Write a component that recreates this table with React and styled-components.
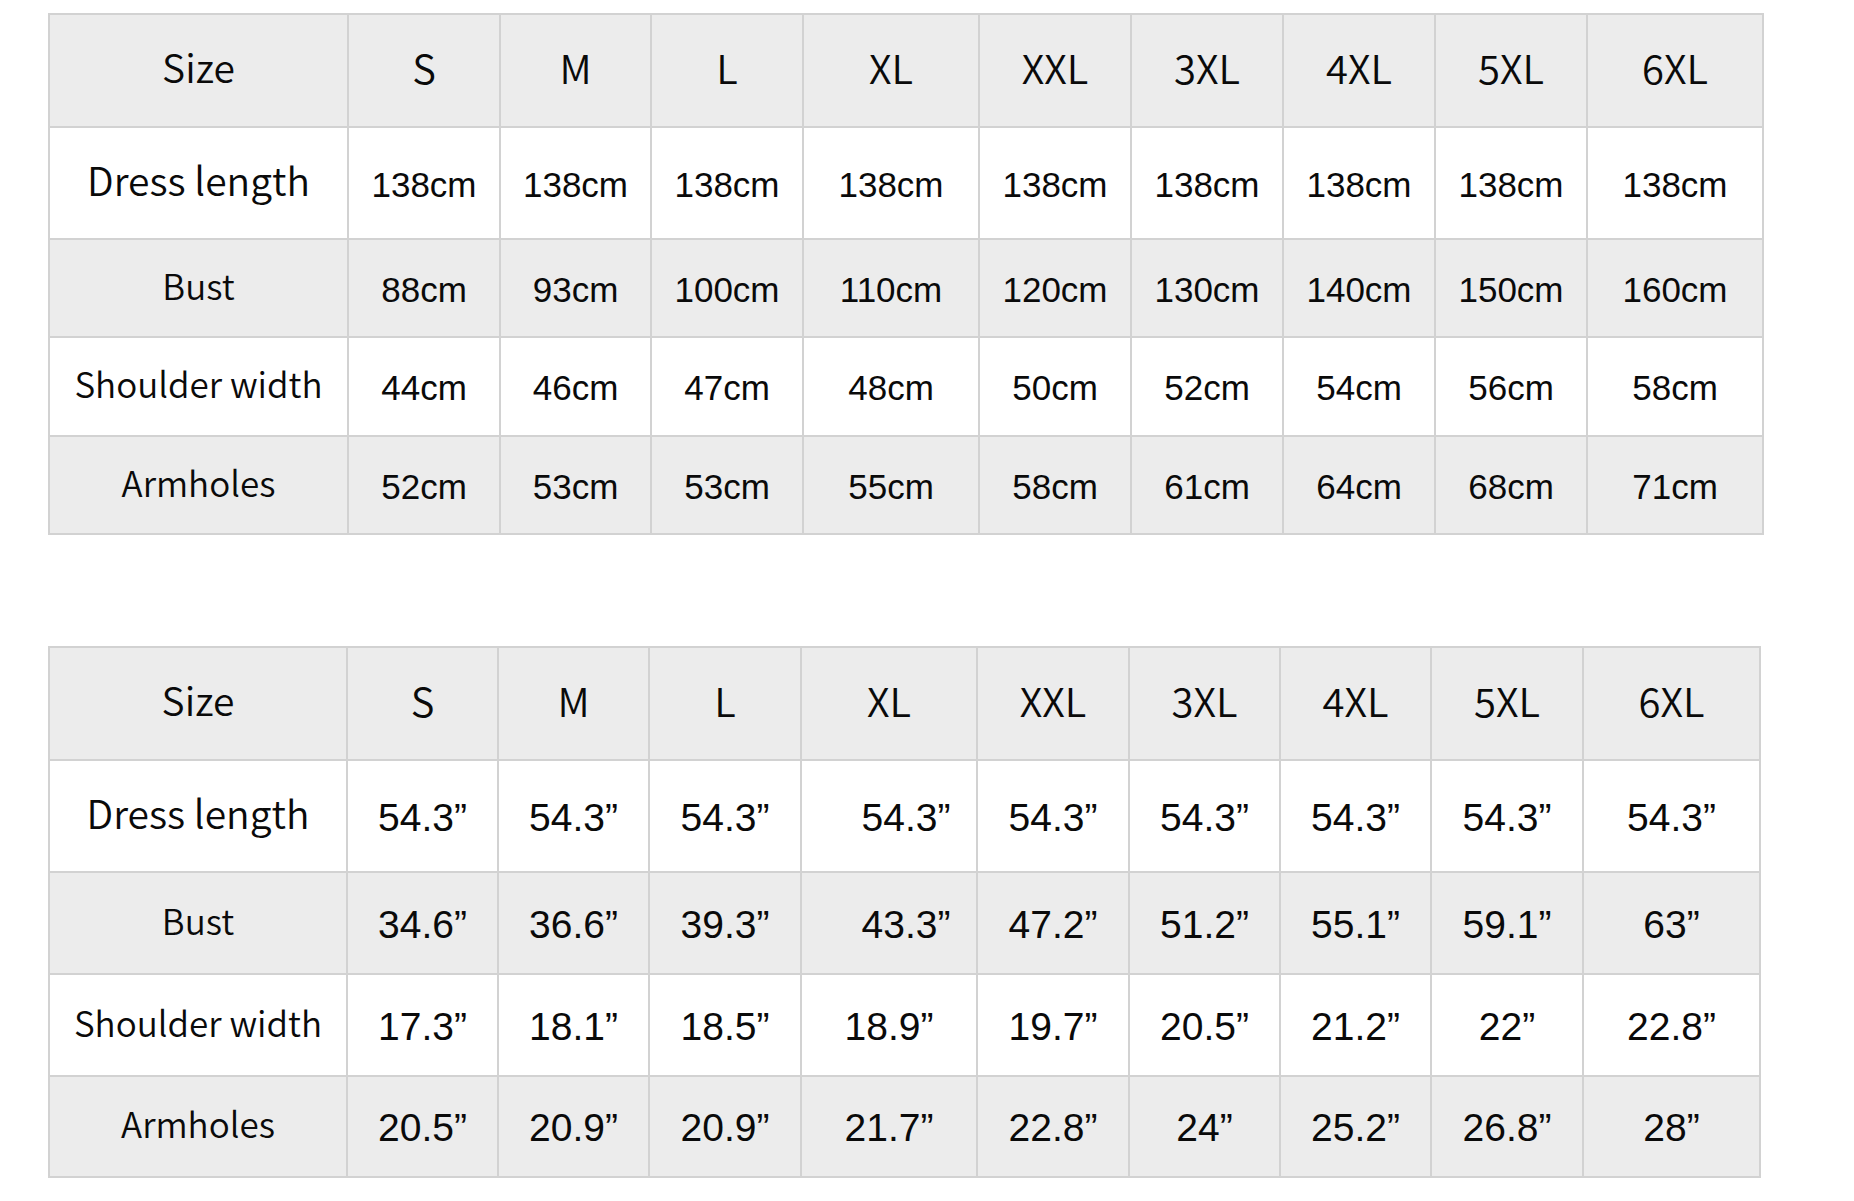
import React from "react";
import styled, { createGlobalStyle } from "styled-components";

const GlobalStyle = createGlobalStyle`
  body {
    margin: 0;
    background: #ffffff;
  }
`;

const Page = styled.div`
  display: flex;
  flex-direction: column;
  gap: 111px;
  padding: 13px 0 0 48px;
  background: #ffffff;
  min-height: 1188px;
`;

const Grid = styled.div`
  display: grid;
  grid-template-columns: ${(p) => p.$cols};
  grid-template-rows: ${(p) => p.$rows};
  gap: 2px;
  padding: 2px;
  background: #d2d2d2;
  width: max-content;
`;

const Cell = styled.div`
  display: flex;
  align-items: center;
  justify-content: center;
  background: ${(p) => (p.$shade ? "#ececec" : "#ffffff")};
  color: #0a0a0a;
  white-space: nowrap;
  line-height: 1;
  padding-left: ${(p) => p.$nudge || 0}px;
`;

const Label = styled(Cell)`
  font-family: "Noto Sans CJK SC DemiLight", "Noto Sans CJK SC", "Noto Sans", sans-serif;
  font-weight: 400;
  font-size: ${(p) => p.$size}px;
  padding-bottom: 8px;
`;

const Value = styled(Cell)`
  font-family: "Liberation Sans", Arial, sans-serif;
  font-size: ${(p) => p.$size}px;
  padding-top: 2px;
`;

const sizes = ["S", "M", "L", "XL", "XXL", "3XL", "4XL", "5XL", "6XL"];

const metric = [
  ["Dress length", ["138cm", "138cm", "138cm", "138cm", "138cm", "138cm", "138cm", "138cm", "138cm"]],
  ["Bust", ["88cm", "93cm", "100cm", "110cm", "120cm", "130cm", "140cm", "150cm", "160cm"]],
  ["Shoulder width", ["44cm", "46cm", "47cm", "48cm", "50cm", "52cm", "54cm", "56cm", "58cm"]],
  ["Armholes", ["52cm", "53cm", "53cm", "55cm", "58cm", "61cm", "64cm", "68cm", "71cm"]],
];

const inch = [
  ["Dress length", ["54.3”", "54.3”", "54.3”", "54.3”", "54.3”", "54.3”", "54.3”", "54.3”", "54.3”"]],
  ["Bust", ["34.6”", "36.6”", "39.3”", "43.3”", "47.2”", "51.2”", "55.1”", "59.1”", "63”"]],
  ["Shoulder width", ["17.3”", "18.1”", "18.5”", "18.9”", "19.7”", "20.5”", "21.2”", "22”", "22.8”"]],
  ["Armholes", ["20.5”", "20.9”", "20.9”", "21.7”", "22.8”", "24”", "25.2”", "26.8”", "28”"]],
];

const SizeTable = ({ cols, rows, data, valueSize, nudges = {} }) => (
  <Grid $cols={cols} $rows={rows}>
    <Label $shade $size={39}>Size</Label>
    {sizes.map((s) => (
      <Label key={s} $shade $size={40}>{s}</Label>
    ))}
    {data.map(([name, values], r) => (
      <React.Fragment key={name}>
        <Label $shade={r % 2 === 1} $size={r === 0 ? 39 : 35}>{name}</Label>
        {values.map((v, i) => (
          <Value
            key={i}
            $shade={r % 2 === 1}
            $size={valueSize}
            $nudge={nudges[`${r}-${i}`]}
          >
            {v}
          </Value>
        ))}
      </React.Fragment>
    ))}
  </Grid>
);

export default function App() {
  return (
    <>
      <GlobalStyle />
      <Page>
        <SizeTable
          cols="297px 150px 149px 150px 174px 150px 150px 150px 150px 174px"
          rows="111px 110px 96px 97px 96px"
          data={metric}
          valueSize={35}
        />
        <SizeTable
          cols="296px 149px 149px 150px 174px 150px 149px 149px 150px 175px"
          rows="111px 110px 100px 100px 99px"
          data={inch}
          valueSize={39}
          nudges={{ "0-3": 34, "1-3": 34 }}
        />
      </Page>
    </>
  );
}
